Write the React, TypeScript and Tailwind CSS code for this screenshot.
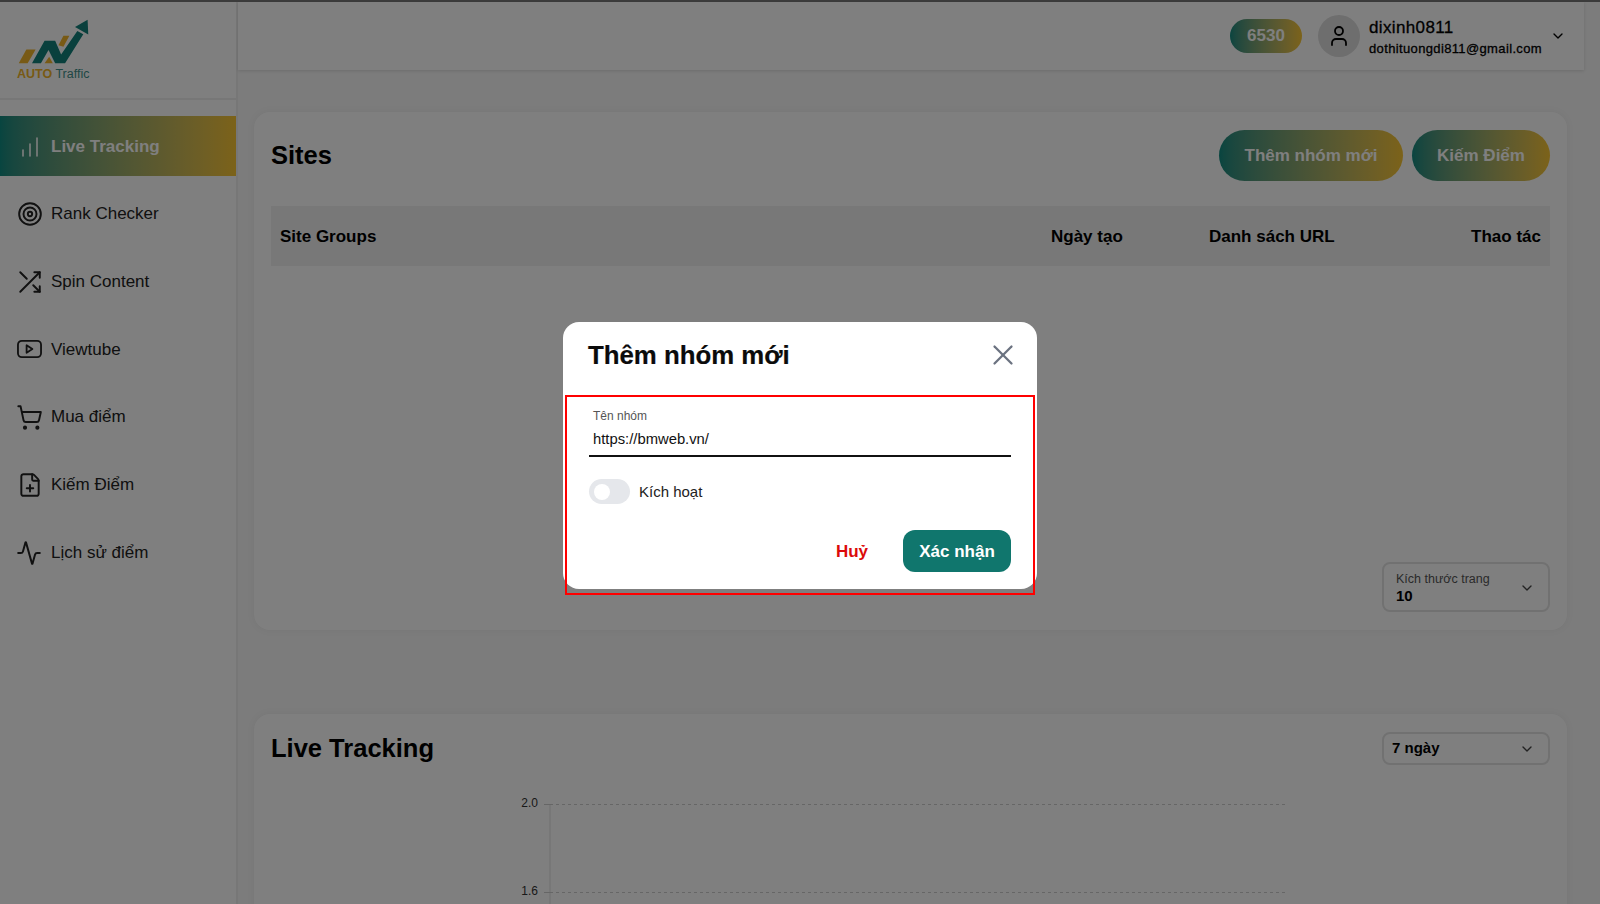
import React from 'react';
import { Activity, ChartNoAxesColumnIncreasing, ChevronDown, FilePlus, ShoppingCart, Target, User, X } from 'lucide-react';

const navItems = [
  { label: 'Rank Checker', icon: <Target className="ml-[1px] w-[26px] h-[26px]" strokeWidth={1.8} /> },
  {
    label: 'Spin Content',
    icon: (
      <svg viewBox="0 0 24 24" className="ml-[1px] w-[26px] h-[26px]" fill="none" stroke="currentColor" strokeWidth="1.8" strokeLinecap="round" strokeLinejoin="round">
        <path d="M16 3h5v5" />
        <path d="M3 21 21 3" />
        <path d="M21 16v5h-5" />
        <path d="m15 15 6 6" />
        <path d="m3 3 6 6" />
      </svg>
    ),
  },
  {
    label: 'Viewtube',
    icon: (
      <svg viewBox="0 0 26 20" className="ml-[1px] w-[25px] h-[20px]" fill="none" stroke="currentColor" strokeWidth="1.9" strokeLinejoin="round">
        <rect x="1" y="1.5" width="24" height="17" rx="4" />
        <path d="M10 6v8l6-4z" />
      </svg>
    ),
  },
  { label: 'Mua điểm', icon: <ShoppingCart className="w-[27px] h-[27px]" strokeWidth={1.7} /> },
  { label: 'Kiếm Điểm', icon: <FilePlus className="ml-[1px] w-[26px] h-[26px]" strokeWidth={1.8} /> },
  { label: 'Lịch sử điểm', icon: <Activity className="w-[26px] h-[26px]" strokeWidth={1.8} /> },
];

const Logo = () => (
  <div className="w-[76px]">
    <svg viewBox="50 50 220 145" className="w-[73px] h-[48px]">
      <polygon points="55,190 78,148 106,148 82,190" fill="#f0b42a" />
      <polygon points="175,135 190,107 208,107 190,140" fill="#f0b42a" />
      <polygon points="133,190 147,170 158,190" fill="#f0b42a" />
      <polygon points="95,190 133,122 165,122 183,163 232,92 250,102 195,190 165,190 145,150 122,190" fill="#12807a" />
      <polygon points="225,80 263,58 265,103" fill="#12807a" />
    </svg>
    <div className="text-[12.5px] leading-[14px] mt-[2px] whitespace-nowrap">
      <span className="font-bold text-[#f0b42a]">AUTO</span> <span className="text-[#3f8f8a]">Traffic</span>
    </div>
  </div>
);

const Sidebar = () => (
  <aside className="w-[238px] shrink-0 bg-white border-r-2 border-[#eeeeee]">
    <div className="h-[98px] pl-[17px] pt-[15px] border-b-2 border-[#eeeeee]">
      <Logo />
    </div>
    <nav className="mt-[16px] flex flex-col gap-[7.75px]">
      <div className="h-[60px] pt-[1px] flex items-center bg-gradient-to-r from-[#0f8a80] to-[#f8c532] text-white font-bold text-[17px]">
        <span className="w-[51px] flex justify-center pl-[8px]">
          <ChartNoAxesColumnIncreasing className="w-[24px] h-[24px]" strokeWidth={1.6} />
        </span>
        Live Tracking
      </div>
      {navItems.map((item) => (
        <div key={item.label} className="h-[60px] flex items-center text-[17px] text-[#222222]">
          <span className="w-[51px] pl-[16px] flex items-center">{item.icon}</span>
          {item.label}
        </div>
      ))}
    </nav>
  </aside>
);

const Header = () => (
  <header className="h-[68px] w-full bg-white shadow-[0_1px_3px_rgba(0,0,0,0.12)] flex items-center justify-end pr-[18px]">
    <div className="w-[72px] h-[34px] rounded-full bg-gradient-to-r from-[#0f8a80] to-[#f8c532] text-white font-bold text-[17px] flex items-center justify-center">
      6530
    </div>
    <div className="ml-[16px] w-[42px] h-[42px] rounded-full bg-[#dcdcdc] flex items-center justify-center text-black">
      <User className="w-[24px] h-[24px]" strokeWidth={1.8} />
    </div>
    <div className="ml-[9px] mt-[2px] text-black [-webkit-text-stroke:0.3px_black]">
      <div className="text-[17px] leading-[22px] tracking-[0.36px]">dixinh0811</div>
      <div className="text-[13px] leading-[18px] mt-[1px] tracking-[0.36px]">dothituongdi811@gmail.com</div>
    </div>
    <ChevronDown className="ml-[8px] w-[16px] h-[16px] text-black" />
  </header>
);

const GradientButton = ({ label, width }: { label: string; width: string }) => (
  <button className={`${width} h-[51px] rounded-full bg-gradient-to-r from-[#0f8a80] to-[#f8c532] text-white font-bold text-[17px]`}>
    {label}
  </button>
);

const Chart = () => (
  <svg width="800" height="120" className="ml-[239px] mt-[25px] block">
    <text x="28" y="17" textAnchor="end" fontSize="12" fill="#333333">2.0</text>
    <text x="28" y="105" textAnchor="end" fontSize="12" fill="#333333">1.6</text>
    <line x1="40" y1="14.5" x2="40" y2="120" stroke="#dddddd" strokeWidth="1" />
    <line x1="34" y1="14.5" x2="40" y2="14.5" stroke="#cccccc" />
    <line x1="34" y1="102.5" x2="40" y2="102.5" stroke="#cccccc" />
    <line x1="40" y1="14.5" x2="778" y2="14.5" stroke="#cccccc" strokeDasharray="3 3" />
    <line x1="40" y1="102.5" x2="778" y2="102.5" stroke="#cccccc" strokeDasharray="3 3" />
  </svg>
);

const Modal = () => (
  <div className="fixed inset-0 bg-black/50 flex justify-center items-start pt-[322px]">
    <div className="relative w-[474px] bg-white rounded-[16px] px-[26px] pb-[17px]">
      <div className="h-[65px] flex items-center justify-between">
        <h2 className="-ml-[1px] pt-[2px] text-[25.8px] font-bold text-[#0b0b0b] [-webkit-text-stroke:0.2px_#0b0b0b]">Thêm nhóm mới</h2>
        <X className="w-[34px] h-[34px] text-[#6b7280] mr-[-9px]" strokeWidth={1.6} />
      </div>
      <div className="pt-[21px]">
        <div className="pl-[4px] text-[12px] leading-[16px] text-[#555555]">Tên nhóm</div>
        <div className="mt-[6px] pl-[4px] pb-[7px] text-[14.8px] leading-[18px] text-[#111111] border-b-2 border-[#111111]">
          https://bmweb.vn/
        </div>
      </div>
      <div className="mt-[22px] flex items-center">
        <div className="w-[41px] h-[25px] rounded-full bg-[#e5e7eb] flex items-center pl-[5px]">
          <div className="w-[16px] h-[16px] rounded-full bg-white" />
        </div>
        <span className="ml-[9px] pt-[1px] text-[15px] text-[#222222]">Kích hoạt</span>
      </div>
      <div className="mt-[26px] flex items-center justify-end gap-[35px]">
        <span className="pt-[1px] text-[17px] font-bold text-[#dc0a0a]">Huỷ</span>
        <button className="w-[108px] h-[42px] pt-[1px] rounded-[12px] bg-[#10766d] text-white font-bold text-[17px]">Xác nhận</button>
      </div>
      <div className="absolute left-[2px] top-[73px] w-[470px] h-[200px] border-2 border-[#ff0000] pointer-events-none" />
    </div>
  </div>
);

export default function App() {
  return (
    <div className="h-screen overflow-hidden flex flex-col bg-[#f8f8f8] font-['Liberation_Sans',Arial,sans-serif]">
      <div className="h-[2px] shrink-0 bg-[#777777]" />
      <div className="flex flex-1 min-h-0">
        <Sidebar />
        <main className="flex-1 min-w-0 pr-[16px]">
          <Header />
          <div className="pl-[16px] pr-[17px] pt-[42px] flex flex-col gap-[84px]">
            <section className="h-[518px] shrink-0 bg-white rounded-[16px] shadow-[0_0_8px_rgba(0,0,0,0.05)] px-[17px] pt-[18px] pb-[18px] flex flex-col">
              <div className="flex items-center justify-between">
                <h2 className="text-[25.5px] font-bold text-black">Sites</h2>
                <div className="flex gap-[9px]">
                  <GradientButton label="Thêm nhóm mới" width="w-[184px]" />
                  <GradientButton label="Kiếm Điểm" width="w-[138px]" />
                </div>
              </div>
              <div className="mt-[25px] h-[60px] shrink-0 bg-[#f0f0f0] px-[9px] pt-[1px] grid grid-cols-[771px_158px_1fr_auto] items-center text-[17px] font-bold text-black">
                <span>Site Groups</span>
                <span>Ngày tạo</span>
                <span>Danh sách URL</span>
                <span>Thao tác</span>
              </div>
              <div className="flex-1 flex items-end justify-end">
                <div className="w-[168px] h-[50px] rounded-[8px] border-2 border-[#e3e3e3] pl-[12px] pr-[13px] pt-[1px] flex items-center justify-between">
                  <div>
                    <div className="text-[12.5px] leading-[15px] text-[#555555]">Kích thước trang</div>
                    <div className="text-[15px] leading-[17px] font-bold text-black">10</div>
                  </div>
                  <ChevronDown className="w-[16px] h-[16px] text-[#444444]" />
                </div>
              </div>
            </section>
            <section className="h-[400px] shrink-0 bg-white rounded-[16px] shadow-[0_0_8px_rgba(0,0,0,0.05)] px-[17px] pt-[18px]">
              <div className="flex items-center justify-between">
                <h2 className="text-[25.5px] leading-[33px] font-bold text-black">Live Tracking</h2>
                <div className="w-[168px] h-[33px] rounded-[8px] border-2 border-[#e3e3e3] pl-[8px] pr-[13px] flex items-center justify-between">
                  <span className="text-[15px] font-bold text-black">7 ngày</span>
                  <ChevronDown className="w-[16px] h-[16px] text-[#444444]" />
                </div>
              </div>
              <Chart />
            </section>
          </div>
        </main>
      </div>
      <Modal />
    </div>
  );
}
